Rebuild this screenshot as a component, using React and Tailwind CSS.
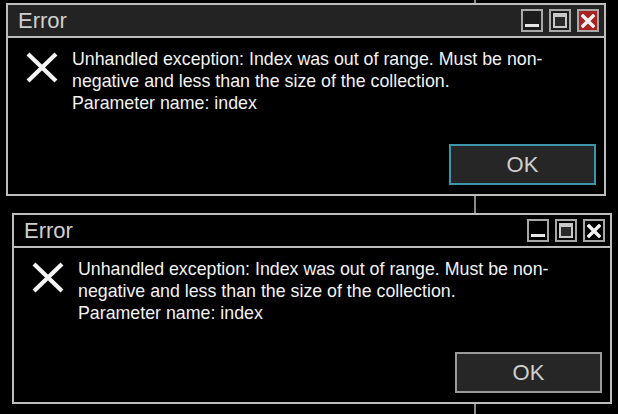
import React from 'react';

const MESSAGE_LINES = [
  'Unhandled exception: Index was out of range. Must be non-',
  'negative and less than the size of the collection.',
  'Parameter name: index',
];

const TitleButton = ({ kind, active }) => {
  const isClose = kind === 'close';
  return (
    <div
      className={`flex h-[23px] w-[22px] items-center justify-center border-2 border-[#a8a8a8] ${
        isClose && active ? 'bg-[#a82424]' : active ? 'bg-[#1c1c1c]' : 'bg-black'
      }`}
    >
      {kind === 'min' && <div className="mt-[9px] h-[3px] w-[14px] bg-[#e8e8e8]" />}
      {kind === 'max' && (
        <div className="h-[15px] w-[14px] border-2 border-t-[4px] border-[#c8c8c8] bg-[#2a2a2a]" />
      )}
      {isClose && (
        <svg width="14" height="14" viewBox="0 0 14 14">
          <path d="M2 2 L12 12 M12 2 L2 12" stroke="#f2f2f2" strokeWidth="3.4" strokeLinecap="square" />
        </svg>
      )}
    </div>
  );
};

const ErrorWindow = ({ active, className }) => {
  return (
    <div
      className={`relative z-10 flex w-[600px] flex-col border-2 border-[#bdbdbd] bg-black ${className}`}
    >
      {/* title bar */}
      <div
        className={`flex h-[33px] items-center justify-between border-b-2 border-[#bdbdbd] pl-[10px] pr-[5px] ${
          active ? 'bg-[#232323]' : 'bg-black'
        }`}
      >
        <span className="text-[22px] leading-none text-[#cfcfcf]">Error</span>
        <div className="flex gap-[6px]">
          <TitleButton kind="min" active={active} />
          <TitleButton kind="max" active={active} />
          <TitleButton kind="close" active={active} />
        </div>
      </div>

      {/* body */}
      <div className="flex flex-1 flex-col px-2 pt-[9px] pb-[9px]">
        <div className="flex">
          <svg width="34" height="33" viewBox="0 0 34 33" className="mt-[4px] ml-[9px] shrink-0">
            <path d="M3 3 L31 30 M31 3 L3 30" stroke="#f5f5f5" strokeWidth="4.2" />
          </svg>
          <div className="mt-[2px] ml-[13px] text-[17.8px] leading-[21.8px] text-[#f2f2f2]">
            {MESSAGE_LINES.map(line => (
              <div key={line}>{line}</div>
            ))}
          </div>
        </div>
        <div className="mt-auto flex justify-end">
          <button
            className={`flex h-[41px] w-[147px] items-center justify-center border-2 bg-[#262626] text-[22px] text-[#cfcfcf] ${
              active ? 'border-[#3e94ab]' : 'border-[#9a9a9a]'
            }`}
          >
            OK
          </button>
        </div>
      </div>
    </div>
  );
};

const App = () => {
  return (
    <div
      className="relative h-[414px] w-[618px] overflow-hidden bg-black pt-[3px]"
      style={{ fontFamily: '"Liberation Sans", Arial, sans-serif' }}
    >
      {/* connector line behind the windows */}
      <div className="absolute top-0 bottom-0 left-[474px] w-[2px] bg-[#8a8a8a]" />

      <ErrorWindow active className="ml-[6px] h-[193px]" />
      <ErrorWindow className="mt-[17px] ml-[12px] h-[191px]" />
    </div>
  );
};

export default App;
